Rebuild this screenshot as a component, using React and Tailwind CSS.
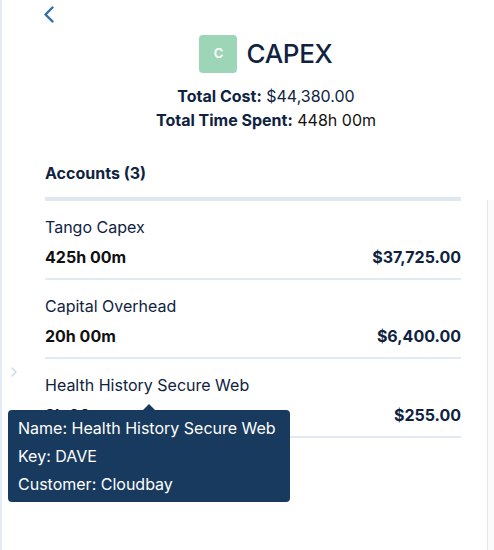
import { ChevronRight } from "lucide-react";

const accounts = [
  { name: "Tango Capex", time: "425h 00m", cost: "$37,725.00" },
  { name: "Capital Overhead", time: "20h 00m", cost: "$6,400.00" },
  { name: "Health History Secure Web", time: "2h 00m", cost: "$255.00" },
];

export default function App() {
  return (
    <div
      className="relative flex h-[550px] w-[494px] overflow-hidden bg-white text-[#0f2341]"
      style={{ fontFamily: "Inter, 'Noto Sans', sans-serif" }}
    >
      {/* main panel */}
      <div className="relative w-[487px] border-l-2 border-[#e2ecf6] pl-[43px]">
        <div className="flex h-[28px] items-center -ml-[2px]">
          <svg width="12" height="17" viewBox="0 0 12 17" className="text-[#2f6da8]">
            <polyline
              points="9.5,1.5 2.5,8.5 9.5,15.5"
              fill="none"
              stroke="currentColor"
              strokeWidth="2.4"
              strokeLinecap="round"
              strokeLinejoin="round"
            />
          </svg>
        </div>

        {/* header */}
        <div className="mt-[7px] flex flex-col items-center">
          <div className="flex items-center gap-[9px]">
            <div className="flex h-[38px] w-[38px] items-center justify-center rounded-[4px] bg-[#9dd6b7] text-[13px] font-semibold text-white">
              C
            </div>
            <div className="text-[26px] font-medium leading-none tracking-[-0.3px] text-[#0f2341]">
              CAPEX
            </div>
          </div>
          <div className="mt-[11px] text-[16px] leading-[24px]">
            <span className="font-bold">Total Cost:</span> $44,380.00
          </div>
          <div className="text-[16px] leading-[24px]">
            <span className="font-bold">Total Time Spent:</span>{" "}
            <span className="text-[#111]">448h 00m</span>
          </div>
        </div>

        {/* accounts */}
        <div className="mr-[26px] mt-[29px]">
          <div className="text-[16px] font-bold leading-[24px]">Accounts (3)</div>
          <div className="mt-[12px] h-[4px] bg-[#dfe7f0]" />
          {accounts.map((a) => (
            <div key={a.name} className="border-b-2 border-[#e2e9f1] pt-[14px] pb-[9px]">
              <div className="text-[16px] leading-[24px]">{a.name}</div>
              <div className="mt-[6px] flex justify-between text-[16px] font-bold leading-[24px]">
                <span className="text-[#111]">{a.time}</span>
                <span>{a.cost}</span>
              </div>
            </div>
          ))}
        </div>

        <ChevronRight
          size={16}
          strokeWidth={2}
          className="absolute left-[4px] top-[364px] text-[#c6dae6]"
        />

        {/* tooltip */}
        <div className="absolute left-[6px] top-[410px] w-[282px] whitespace-nowrap rounded-[4px] bg-[#173a5e] px-[10px] py-[4px] text-[16px] leading-[28px] text-white">
          <div className="absolute -top-[6px] left-[135px] h-0 w-0 border-x-[6px] border-b-[6px] border-x-transparent border-b-[#173a5e]" />
          <div>Name: Health History Secure Web</div>
          <div>Key: DAVE</div>
          <div>Customer: Cloudbay</div>
        </div>
      </div>

      {/* side strip */}
      <div className="mt-[200px] flex-1 border-l border-[#e6e6e6] bg-[#fbfbfb]" />
    </div>
  );
}
